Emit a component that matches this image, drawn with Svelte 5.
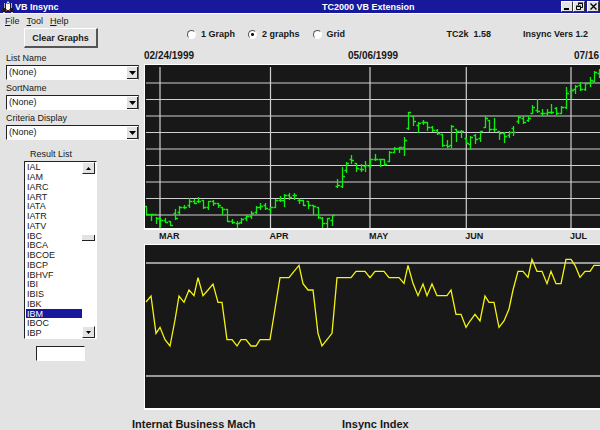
<script>
  const symbols = [
    'IAL', 'IAM', 'IARC', 'IART', 'IATA', 'IATR', 'IATV', 'IBC', 'IBCA',
    'IBCOE', 'IBCP', 'IBHVF', 'IBI', 'IBIS', 'IBK', 'IBM', 'IBOC', 'IBP'
  ];
  const filters = [
    { id: 'list-name', label: 'List Name' },
    { id: 'sort-name', label: 'SortName' },
    { id: 'criteria', label: 'Criteria Display' }
  ];
  const modes = ['1 Graph', '2 graphs', 'Grid'];
  const months = [
    { x: 15, name: 'MAR' },
    { x: 125.5, name: 'APR' },
    { x: 225, name: 'MAY' },
    { x: 321.3, name: 'JUN' },
    { x: 426, name: 'JUL' }
  ];
  const gridRows = Array.from({ length: 9 }, (_, i) => 18 + i * 16.5);

  // Daily bars: open, high, low, close
  const bars = [
    [437, 437, 461, 461], [461, 461, 479, 463], [463, 470, 490, 473], [473, 475, 497, 480],
    [480, 473, 487, 487], [484, 484, 496, 494], [458, 448, 477, 475], [457, 438, 462, 440],
    [440, 436, 443, 440], [436, 415, 440, 424], [424, 418, 430, 428], [422, 410, 427, 422],
    [420, 420, 443, 442], [440, 424, 447, 424], [424, 420, 436, 430], [428, 428, 440, 436],
    [440, 440, 463, 446], [446, 446, 483, 483], [483, 476, 490, 487], [490, 484, 500, 490],
    [485, 473, 490, 478], [475, 464, 479, 468], [468, 454, 473, 459], [457, 437, 459, 440],
    [440, 430, 448, 437], [435, 429, 447, 443], [447, 440, 459, 440], [440, 418, 441, 420],
    [420, 408, 424, 420], [420, 402, 437, 405], [405, 400, 418, 410], [405, 400, 416, 406],
    [420, 415, 430, 420], [420, 420, 434, 434], [422, 422, 444, 436], [436, 434, 461, 438],
    [442, 442, 474, 472], [474, 470, 501, 490], [490, 474, 503, 475], [480, 465, 496, 466],
    [378, 356, 380, 375], [378, 322, 380, 348], [330, 307, 336, 308], [298, 286, 310, 300],
    [308, 308, 333, 325], [328, 313, 334, 328], [318, 303, 334, 316], [318, 298, 320, 298],
    [298, 283, 300, 298], [298, 296, 317, 298], [298, 296, 316, 312], [302, 274, 303, 276],
    [275, 260, 277, 264], [264, 260, 275, 260], [260, 230, 285, 240], [205, 155, 206, 157],
    [168, 168, 195, 182], [195, 186, 215, 190], [187, 181, 192, 187], [187, 187, 210, 200],
    [200, 197, 212, 211], [211, 208, 223, 220], [222, 222, 258, 256], [256, 241, 260, 258],
    [255, 196, 260, 198], [208, 208, 243, 214], [214, 210, 230, 214], [235, 233, 250, 248],
    [252, 227, 268, 230], [226, 222, 250, 238], [235, 214, 244, 214], [200, 168, 202, 175],
    [180, 180, 212, 208], [208, 175, 212, 208], [214, 212, 237, 218], [218, 216, 245, 228],
    [225, 213, 230, 216], [205, 197, 226, 216], [182, 168, 188, 170], [175, 168, 190, 186],
    [180, 168, 184, 175], [158, 134, 158, 140], [150, 118, 157, 152], [158, 148, 165, 158],
    [160, 146, 166, 155], [155, 132, 158, 155], [145, 141, 162, 158], [158, 138, 160, 142],
    [142, 82, 144, 98], [93, 85, 115, 90], [88, 76, 100, 78], [76, 67, 90, 88],
    [88, 68, 90, 70], [70, 52, 77, 60], [62, 34, 64, 35], [40, 26, 50, 30]
  ];
  const index = [
    186, 168, 280, 262, 299, 318, 240, 168, 187, 150, 167, 113, 167, 150, 132, 187, 187, 299, 299,
    318, 299, 299, 318, 318, 299, 299, 299, 207, 113, 113, 113, 94, 76, 131, 150, 150, 280, 318,
    299, 280, 113, 113, 113, 113, 94, 94, 94, 113, 94, 94, 94, 113, 113, 113, 130, 76, 130, 167,
    132, 167, 132, 167, 167, 167, 150, 223, 223, 262, 243, 223, 243, 168, 187, 187, 262, 243, 207,
    150, 94, 94, 112, 58, 94, 94, 131, 94, 131, 131, 58, 58, 76, 112, 94, 94, 76, 76, 76
  ];
  const px = (i) => Math.round(i * 4.77) + 1;
  const py = (v) => Math.round((v - 15) / 3);
  const barPath = bars
    .map(([o, h, l, c], i) => {
      const x = px(i) + 0.5;
      return `M${x} ${py(h)}V${py(l) + 1}M${x - 2} ${py(o) + 0.5}H${x}M${x} ${py(c) + 0.5}H${x + 2.5}`;
    })
    .join('');
  const indexPoints = index.map((v, i) => `${px(i)},${(v - 15) / 3}`).join(' ');

  let mode = $state('2 graphs');
  let selected = $state('IBM');
  let quick = $state('');
</script>

<div class="window">
  <header class="titlebar">
    <svg class="logo" width="12" height="12" viewBox="0 0 12 12" aria-hidden="true">
      <path d="M1 2h3v5l1 1v3H0V8l1-1zM8 2h2v5l2 1v3H7V8l1-1z" fill="#1c1c1c" />
      <path d="M2 2h1v5H2zM9 2h1v5H9zM1 11h2v1H1zM9 11h2v1H9z" fill="#b8b8b8" />
      <path d="M4 3l2-3 2 3v6H4z" fill="#f4f4f4" />
      <path d="M5 2h2v1H5zM4 8h1v2H4zM7 8h1v2H7z" fill="#d33" />
      <path d="M5 9h2v2H5z" fill="#1c1c1c" />
    </svg>
    <span class="app">VB Insync</span>
    <span class="doc">TC2000 VB Extension</span>
    <div class="controls">
      <button aria-label="Minimize"><svg width="11" height="9"><path d="M2 7h5" stroke="#000" stroke-width="2" /></svg></button>
      <button aria-label="Restore"><svg width="11" height="9"><path d="M4.500 3V1.500H8.500V5.500H7M4 1h5M2.500 4.500h4v3h-4zM2 4h5" fill="none" stroke="#000" /></svg></button>
      <button class="close" aria-label="Close"><svg width="11" height="9"><path d="M2.500 1.500l6 6M8.500 1.500l-6 6" stroke="#000" stroke-width="1.400" /></svg></button>
    </div>
  </header>

  <main>
    <aside>
      <nav>
        <button><u>F</u>ile</button>
        <button><u>T</u>ool</button>
        <button><u>H</u>elp</button>
      </nav>
      <button class="clear">Clear Graphs</button>
      {#each filters as f}
        <div class="field">
          <label for={f.id}>{f.label}</label>
          <div class="combo">
            <select id={f.id}><option>(None)</option></select>
            <span class="drop"><svg width="7" height="4"><path d="M0 0h7L3.500 4z" /></svg></span>
          </div>
        </div>
      {/each}
      <div class="results">
        <label for="results">Result List</label>
        <div class="listbox">
          <select id="results" size="18" bind:value={selected}>
            {#each symbols as s}<option>{s}</option>{/each}
          </select>
          <div class="scroll">
            <button aria-label="Scroll up"><svg width="5" height="3"><path d="M0 3h5L2.500 0z" /></svg></button>
            <span class="thumb"></span>
            <button aria-label="Scroll down"><svg width="5" height="3"><path d="M0 0h5L2.500 3z" /></svg></button>
          </div>
        </div>
      </div>
      <input class="quick" aria-label="Symbol" bind:value={quick} />
    </aside>

    <section>
      <div class="options">
        {#each modes as m}
          <label><input type="radio" name="mode" value={m} bind:group={mode} />{m}</label>
        {/each}
        <span class="tc">TC2k&nbsp; 1.58</span>
        <span>Insync Vers 1.2</span>
      </div>
      <div class="dates">
        <span>02/24/1999</span><span>05/06/1999</span><span>07/16</span>
      </div>
      <svg class="chart" role="img" aria-label="Price">
        <g stroke="#d0d0d0" stroke-width="1.200">
          {#each gridRows as y}<line x1="1" x2="100%" y1={y} y2={y} />{/each}
          {#each months as m}<line x1={m.x} x2={m.x} y1="2" y2="100%" />{/each}
        </g>
        <path d={barPath} fill="none" stroke="#0cf00c" stroke-width="1.300" />
      </svg>
      <svg class="axis">
        {#each months as m}<text x={m.x} y="9">{m.name}</text>{/each}
      </svg>
      <svg class="chart" role="img" aria-label="Index">
        <line x1="1" x2="100%" y1="18" y2="18" stroke="#999" stroke-width="2" />
        <line x1="1" x2="100%" y1="131" y2="131" stroke="#999" stroke-width="2" />
        <polyline points={indexPoints} fill="none" stroke="#f4f410" stroke-width="1.300" />
      </svg>
      <footer><span>Internat Business Mach</span><span>Insync Index</span></footer>
    </section>
  </main>
</div>

<style>
  :global(body) {
    margin: 0;
    background: #e3e3e3;
    overflow: hidden;
  }
  .window {
    min-height: 100vh;
    overflow: hidden;
    background: #e3e3e3;
    color: #181818;
    font: 9px/12px 'Liberation Sans', Arial, sans-serif;
  }
  button,
  input,
  select {
    appearance: none;
    box-sizing: border-box;
    margin: 0;
    padding: 0;
    border: 0;
    border-radius: 0;
    outline: 0;
    background: none;
    color: inherit;
    font: inherit;
  }
  svg {
    display: block;
  }
  .titlebar {
    display: flex;
    align-items: center;
    height: 13px;
    background: #18189c;
    border-bottom: 1px solid #fff;
    color: #fff;
    font-weight: bold;
  }
  .logo {
    margin: 0 1px 0 2px;
  }
  .app {
    flex: 0 0 307px;
  }
  .doc {
    flex: 1;
  }
  .controls {
    display: flex;
    padding-right: 1px;
  }
  .controls button {
    width: 12px;
    height: 11px;
    background: #e3e3e3;
    border: 1px solid #fff;
    border-right-color: #333;
    border-bottom-color: #333;
  }
  .controls .close {
    margin-left: 2px;
  }
  main {
    display: grid;
    grid-template-columns: 144px 1fr;
  }
  aside {
    display: flex;
    flex-direction: column;
    align-items: flex-start;
  }
  nav {
    display: flex;
    gap: 7px;
    height: 14px;
    padding-left: 5px;
  }
  nav button {
    height: 14px;
  }
  .clear {
    width: 74px;
    height: 20px;
    margin: 0 0 3px 24px;
    border: 1px solid #fff;
    border-right: 2px solid #555;
    border-bottom: 2px solid #555;
    font-weight: bold;
  }
  .field {
    width: 133px;
    margin: 0 0 1px 6px;
  }
  .field label,
  .results label {
    display: block;
    height: 14px;
    line-height: 14px;
  }
  .combo,
  .listbox,
  .quick {
    box-sizing: border-box;
    background: #fff;
    border: 1px solid #fff;
    border-top: 1px solid #222;
    border-left: 1px solid #222;
  }
  .combo {
    position: relative;
    height: 15px;
    border-right: 1px solid #666;
  }
  .combo select {
    display: block;
    width: 100%;
    height: 13px;
    padding-left: 2px;
    line-height: 13px;
  }
  .drop {
    position: absolute;
    top: 1px;
    right: 0;
    bottom: 0;
    width: 11px;
    display: grid;
    place-items: center;
    box-sizing: border-box;
    background: #e3e3e3;
    border-right: 1px solid #222;
    border-bottom: 1px solid #222;
    pointer-events: none;
  }
  .results {
    margin: 6px 0 0 24px;
  }
  .results label {
    padding-left: 6px;
  }
  .listbox {
    display: flex;
    width: 73px;
    height: 178px;
  }
  .listbox select {
    flex: 1;
    height: 176px;
    padding-left: 1px;
    overflow: hidden;
  }
  .listbox option {
    box-sizing: border-box;
    height: 10px;
    min-height: 0;
    padding: 0 1px;
    line-height: 10px;
  }
  .listbox option:nth-child(4n) {
    height: 9px;
  }
  .listbox option:checked {
    background: #18189c linear-gradient(#18189c, #18189c);
    color: #fff;
  }
  .scroll {
    display: flex;
    flex-direction: column;
    justify-content: space-between;
    width: 13px;
    padding-right: 1px;
  }
  .scroll button {
    display: grid;
    place-items: center;
    height: 12px;
    background: #e3e3e3;
    border: 1px solid #fff;
    border-right-color: #222;
    border-bottom-color: #222;
  }
  .scroll .thumb {
    height: 6px;
    margin-bottom: 24px;
    box-sizing: border-box;
    background: #e3e3e3;
    border-right: 1px solid #222;
    border-bottom: 1px solid #222;
  }
  .quick {
    width: 49px;
    height: 15px;
    margin: 7px 0 0 36px;
  }
  section {
    min-width: 0;
    font-weight: bold;
  }
  .options {
    display: flex;
    align-items: center;
    height: 12px;
    padding: 14px 12px 0 43px;
    white-space: nowrap;
  }
  .options label {
    display: flex;
    align-items: center;
    gap: 5px;
    margin-right: 13px;
  }
  .options input {
    width: 9px;
    height: 9px;
    border-radius: 50%;
    border: 1px solid #fff;
    border-top-color: #555;
    border-left-color: #555;
    background: #fff;
  }
  .options input:checked {
    background: radial-gradient(circle, #111 1px, #fff 2px);
  }
  .tc {
    margin: 0 32px 0 auto;
  }
  .dates {
    display: grid;
    grid-template-columns: 204px 226px 1fr;
    height: 12px;
    padding-top: 10px;
    margin-bottom: 2px;
    font-size: 10px;
    overflow: hidden;
  }
  .chart {
    box-sizing: content-box;
    width: 100%;
    height: 163px;
    background: #181818;
    border: solid #fff;
    border-width: 1px 0 2px 1px;
  }
  .axis {
    width: 100%;
    height: 14px;
  }
  .axis text {
    fill: #181818;
  }
  footer {
    display: grid;
    grid-template-columns: 210px 1fr;
    margin: 8px 0 0 -12px;
    font-size: 11px;
  }
</style>
